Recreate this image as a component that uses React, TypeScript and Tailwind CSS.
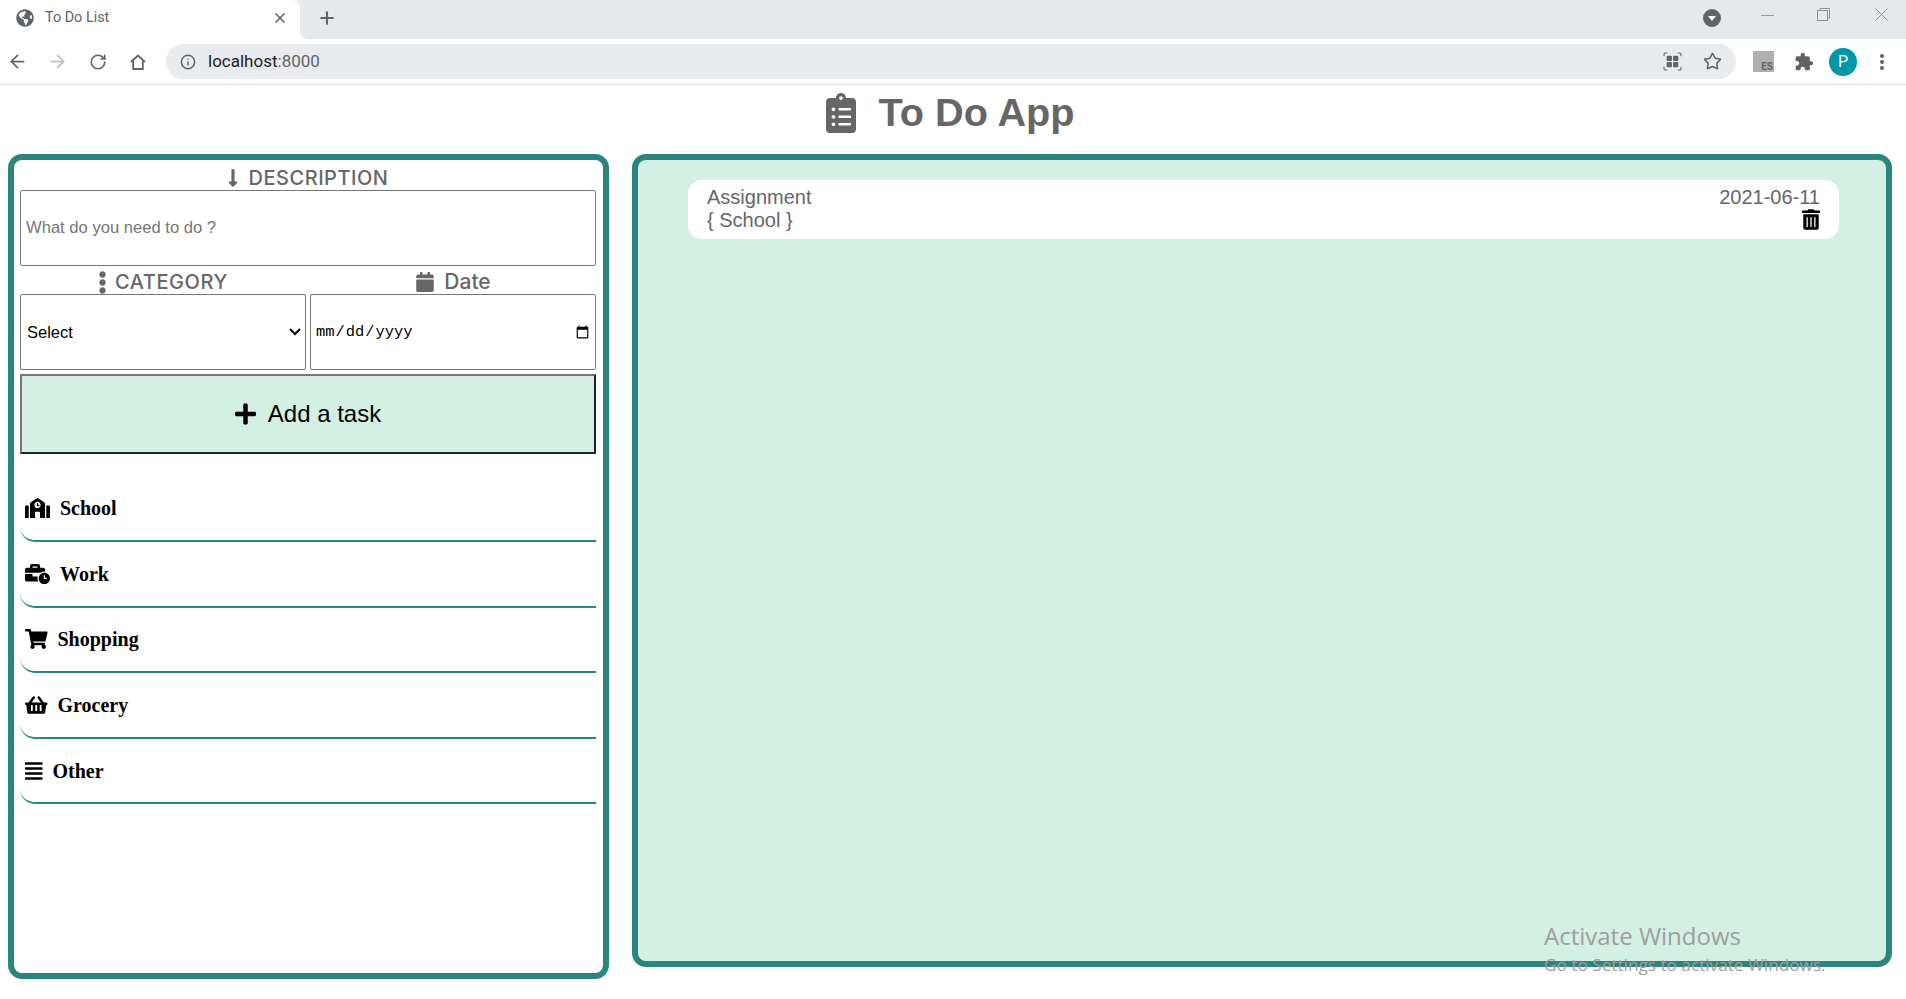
import { ArrowLeft, ArrowRight, RotateCw, Info, Star, X, Plus } from 'lucide-react';
import {
  FaAlignJustify,
  FaBusinessTime,
  FaCalendar,
  FaClipboardList,
  FaEllipsisV,
  FaGlobeAmericas,
  FaLongArrowAltDown,
  FaPlus,
  FaSchool,
  FaShoppingBasket,
  FaShoppingCart,
  FaTrashAlt,
} from 'react-icons/fa';

// Sidebar categories
const categories = [
  { name: 'School', icon: <FaSchool className="w-[25px] h-[20px]" /> },
  { name: 'Work', icon: <FaBusinessTime className="w-[25px] h-[20px]" /> },
  { name: 'Shopping', icon: <FaShoppingCart className="w-[22.5px] h-[20px]" /> },
  { name: 'Grocery', icon: <FaShoppingBasket className="w-[22.5px] h-[20px]" /> },
  { name: 'Other', icon: <FaAlignJustify className="w-[17.5px] h-[20px]" /> },
];

function BrowserChrome() {
  return (
    <div className="font-['Roboto',sans-serif]">
      {/* Tab strip */}
      <div className="flex h-[39px]">
        <div className="w-[300px] bg-[#e6e9ec]">
          <div className="flex h-full items-center rounded-tr-lg bg-white pb-[4px] pl-[16px] pr-[12px]">
            <FaGlobeAmericas className="h-[18px] w-[18px] text-[#5f6368]" />
            <span className="ml-[11px] text-[14.4px] text-[#5f6368]">To Do List</span>
            <X size={16} strokeWidth={2.5} className="ml-auto text-[#5f6368]" />
          </div>
        </div>
        <div className="flex flex-1 items-center rounded-bl-lg bg-[#e6e9ec] pb-[4px] pl-[17px] pr-[18px]">
          <Plus size={20} strokeWidth={2.5} className="text-[#5f6368]" />
          <svg viewBox="0 0 18 18" className="ml-auto mt-[1px] h-[18px] w-[18px]">
            <circle cx="9" cy="9" r="9" fill="#5f6368" />
            <path d="M5 7h8l-4 5z" fill="#fff" />
          </svg>
          <svg viewBox="0 0 13 1" className="mb-[4px] ml-[40px] h-[1px] w-[13px]">
            <rect width="13" height="1" fill="#9a9a9a" />
          </svg>
          <svg viewBox="0 0 13 13" className="mb-[6px] ml-[43px] h-[13px] w-[13px]" fill="none" stroke="#8f8f8f">
            <rect x="0.5" y="2.5" width="10" height="10" />
            <path d="M3 2.5V0.5h9.5v9.5h-2" />
          </svg>
          <svg viewBox="0 0 13 13" className="mb-[6px] ml-[45px] h-[13px] w-[13px]" fill="none" stroke="#8f8f8f">
            <path d="M0.5 0.5l12 12M12.5 0.5l-12 12" />
          </svg>
        </div>
      </div>

      {/* Address bar */}
      <div className="flex h-[46px] items-center border-b border-[#dfe1e5] bg-white pl-[7px] text-[#5f6368]">
        <ArrowLeft size={21} strokeWidth={2} />
        <ArrowRight size={21} strokeWidth={2} className="ml-[19px] text-[#bcbfc3]" />
        <RotateCw size={18} strokeWidth={2.2} className="ml-[21px]" />
        <svg viewBox="0 0 18 18" className="ml-[22px] h-[18px] w-[18px]" fill="none" stroke="currentColor" strokeWidth="1.8">
          <path d="M2 9l7-6.5L16 9M4.2 8v8h9.6V8" />
        </svg>
        <div className="ml-[19px] flex h-[35px] w-[1570px] items-center rounded-full bg-[#e9ebee] pl-[14px] pr-[14px]">
          <Info size={16} strokeWidth={2.2} />
          <span className="ml-[12px] text-[17px]">
            <span className="text-[#202124]">localhost</span>:8000
          </span>
          <svg viewBox="0 0 18 18" className="ml-auto h-[19px] w-[19px]" fill="currentColor">
            <path d="M1 4V2a1 1 0 0 1 1-1h2M14 1h2a1 1 0 0 1 1 1v2M1 14v2a1 1 0 0 0 1 1h2M14 17h2a1 1 0 0 0 1-1v-2" fill="none" stroke="currentColor" />
            <rect x="3.5" y="3.5" width="5" height="5" rx="1" />
            <rect x="9.5" y="3.5" width="5" height="5" rx="1" />
            <rect x="3.5" y="9.5" width="5" height="5" rx="1" />
            <rect x="9.5" y="9.5" width="5" height="5" rx="1" />
          </svg>
          <Star size={19} strokeWidth={2} className="ml-[21px]" />
        </div>
        <div className="relative ml-[17px] h-[21px] w-[21px] bg-[#b0b0b0]">
          <span className="absolute bottom-[-1px] right-[1px] text-[10px] font-bold leading-[12px]">ES</span>
        </div>
        <svg viewBox="0 0 24 24" className="ml-[20px] h-[20px] w-[20px]" fill="currentColor">
          <path d="M20.5 11H19V7c0-1.1-.9-2-2-2h-4V3.5C13 2.12 11.88 1 10.5 1S8 2.12 8 3.5V5H4c-1.1 0-1.99.9-1.99 2v3.8H3.5c1.49 0 2.7 1.21 2.7 2.7s-1.21 2.7-2.7 2.7H2V20c0 1.1.9 2 2 2h3.8v-1.5c0-1.49 1.21-2.7 2.7-2.7 1.49 0 2.7 1.21 2.7 2.7V22H17c1.1 0 2-.9 2-2v-4h1.5c1.38 0 2.5-1.12 2.5-2.5S21.88 11 20.5 11z" />
        </svg>
        <div className="ml-[15px] flex h-[28px] w-[28px] items-center justify-center rounded-full bg-[#0097a7] text-[16px] text-white">
          P
        </div>
        <svg viewBox="0 0 4 16" className="ml-[23px] h-[16px] w-[4px]" fill="currentColor">
          <circle cx="2" cy="2" r="2" />
          <circle cx="2" cy="8" r="2" />
          <circle cx="2" cy="14" r="2" />
        </svg>
      </div>
    </div>
  );
}

function TaskForm() {
  return (
    <div>
      {/* Description */}
      <div className="flex h-[30px] items-center justify-center gap-[11px] pt-[6px] font-['Inter',sans-serif] text-[20px] font-medium text-[#666666]">
        <FaLongArrowAltDown className="h-[20px] w-[10px]" />
        <span className="tracking-[0.5px]">DESCRIPTION</span>
      </div>
      <input
        type="text"
        placeholder="What do you need to do ?"
        className="block h-[76px] w-full rounded-[2px] border border-[#767676] bg-white px-[5px] font-['Liberation_Sans',sans-serif] text-[16.6px] placeholder:text-[#757575]"
      />

      {/* Category and date */}
      <div className="grid grid-cols-2 gap-x-[4px]">
        <div className="flex h-[28px] items-center justify-center gap-[8px] pt-[4px] font-['Inter',sans-serif] text-[20px] font-medium text-[#666666]">
          <FaEllipsisV className="h-[23px] w-[9px]" />
          <span className="tracking-[0.6px]">CATEGORY</span>
        </div>
        <div className="flex h-[28px] items-center justify-center gap-[9px] pt-[4px] font-['Inter',sans-serif] text-[21px] font-medium text-[#666666]">
          <FaCalendar className="h-[20px] w-[20px]" />
          <span>Date</span>
        </div>
        <div className="relative">
          <select className="h-[76px] w-full appearance-none rounded-[2px] border border-[#767676] bg-white pl-[6px] font-['Liberation_Sans',sans-serif] text-[16.5px] text-black">
            <option>Select</option>
          </select>
          <svg viewBox="0 0 12 8" className="pointer-events-none absolute right-[5px] top-[34px] h-[8px] w-[12px]" fill="none" stroke="black" strokeWidth="2">
            <path d="M1 1l5 5 5-5" />
          </svg>
        </div>
        <input
          type="date"
          className="h-[76px] w-full rounded-[2px] border border-[#767676] bg-white pl-[4px] pr-[3px] pt-[2px] font-['Liberation_Mono',monospace] text-[15.4px] text-black"
        />
      </div>

      {/* Add button */}
      <button className="mt-[4px] flex h-[80px] w-full items-center justify-center gap-[12px] border-2 border-[#222222] border-l-[#767676] border-t-[#767676] bg-[#d4f0e4] font-['Liberation_Sans',sans-serif] text-[24px] text-black">
        <FaPlus className="h-[24px] w-[21px]" />
        <span>Add a task</span>
      </button>
    </div>
  );
}

function CategoryList() {
  return (
    <ul className="mt-[22.4px]">
      {categories.map((category) => (
        <li
          key={category.name}
          className="flex h-[65.6px] items-center gap-[10px] rounded-bl-[15px] border-b-2 border-[#2b857f] pl-[5px] font-['Liberation_Serif',serif] text-[20px] font-bold text-black"
        >
          {category.icon}
          <span>{category.name}</span>
        </li>
      ))}
    </ul>
  );
}

export default function App() {
  return (
    <div className="relative h-[999px] overflow-hidden bg-white">
      <BrowserChrome />

      {/* Title */}
      <h1 className="flex h-[69px] items-center justify-center gap-[22px] pb-[13px] pr-[5px] font-['Liberation_Sans',sans-serif] text-[39.7px] font-bold text-[#666666]">
        <FaClipboardList className="h-[40px] w-[30px]" />
        <span>To Do App</span>
      </h1>

      <main className="flex items-start gap-[23px] pl-[8px]">
        {/* Left panel */}
        <section className="h-[825px] w-[601px] rounded-[14px] border-[6px] border-[#2b857f] bg-white pl-[6px] pr-[7px]">
          <TaskForm />
          <CategoryList />
        </section>

        {/* Right panel */}
        <section className="h-[813px] w-[1260px] rounded-[14px] border-[6px] border-[#2b857f] bg-[#d4f0e4] pl-[50px] pr-[47px] pt-[20px]">
          <div className="flex h-[59px] justify-between rounded-[14px] bg-white pl-[19px] pr-[19px] pt-[6px] font-['Liberation_Sans',sans-serif] text-[20px] leading-[23px] text-[#666666]">
            <div>
              <div>Assignment</div>
              <div>{'{ School }'}</div>
            </div>
            <div className="flex flex-col items-end">
              <div>2021-06-11</div>
              <FaTrashAlt className="h-[21px] w-[18px] text-black" />
            </div>
          </div>
        </section>
      </main>

      {/* Windows watermark */}
      <div className="absolute left-[1544px] top-[920px] font-['Open_Sans',sans-serif] text-[#9e9e9e]">
        <div className="text-[24px] leading-[32px]">Activate Windows</div>
        <div className="text-[17.2px] leading-[26px]">Go to Settings to activate Windows.</div>
      </div>
    </div>
  );
}
